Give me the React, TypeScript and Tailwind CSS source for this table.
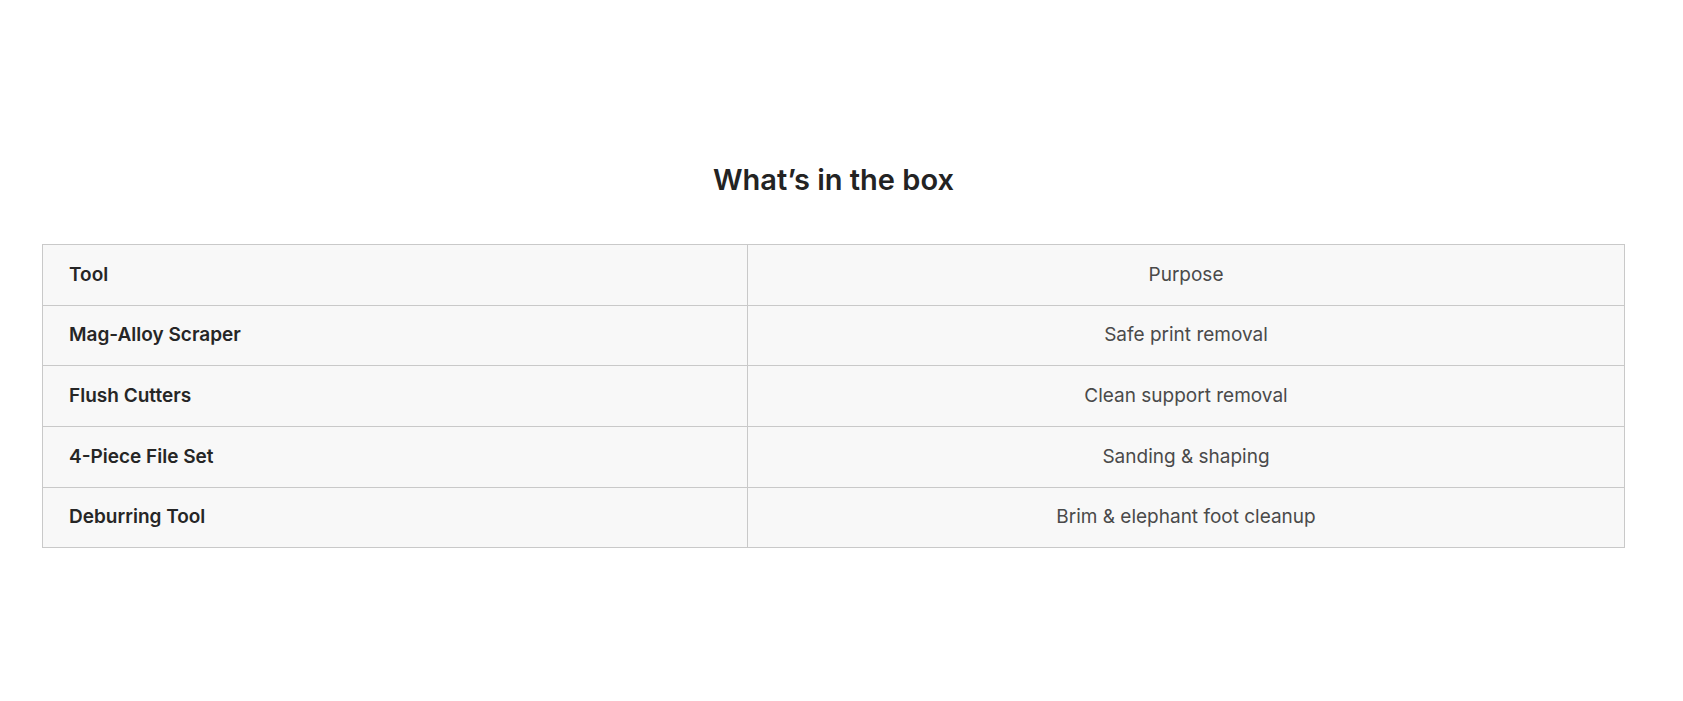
const rows = [
  { tool: "Mag-Alloy Scraper", purpose: "Safe print removal" },
  { tool: "Flush Cutters", purpose: "Clean support removal" },
  { tool: "4-Piece File Set", purpose: "Sanding & shaping" },
  { tool: "Deburring Tool", purpose: "Brim & elephant foot cleanup" },
];

export default function App() {
  return (
    <div
      className="w-full h-[701px] bg-white pt-[162px] pl-[42px] pr-[58px]"
      style={{ fontFamily: "Inter, 'Noto Sans', sans-serif" }}
    >
      <h2 className="text-center text-[29px] leading-[36px] font-semibold text-[#232323]">
        What’s in the box
      </h2>
      <table className="mt-[46px] w-full border-collapse bg-[#f8f8f8] text-[19px]">
        <tbody>
          <tr className="h-[60.7px]">
            <td className="w-[705px] border border-[#c9c9c9] pl-[26px] font-semibold text-[#262626]">
              Tool
            </td>
            <td className="border border-[#c9c9c9] text-center text-[#4a4a4a]">
              Purpose
            </td>
          </tr>
          {rows.map((r) => (
            <tr key={r.tool} className="h-[60.7px]">
              <td className="border border-[#c9c9c9] pl-[26px] font-semibold text-[#262626]">
                {r.tool}
              </td>
              <td className="border border-[#c9c9c9] text-center text-[#4a4a4a]">
                {r.purpose}
              </td>
            </tr>
          ))}
        </tbody>
      </table>
    </div>
  );
}
